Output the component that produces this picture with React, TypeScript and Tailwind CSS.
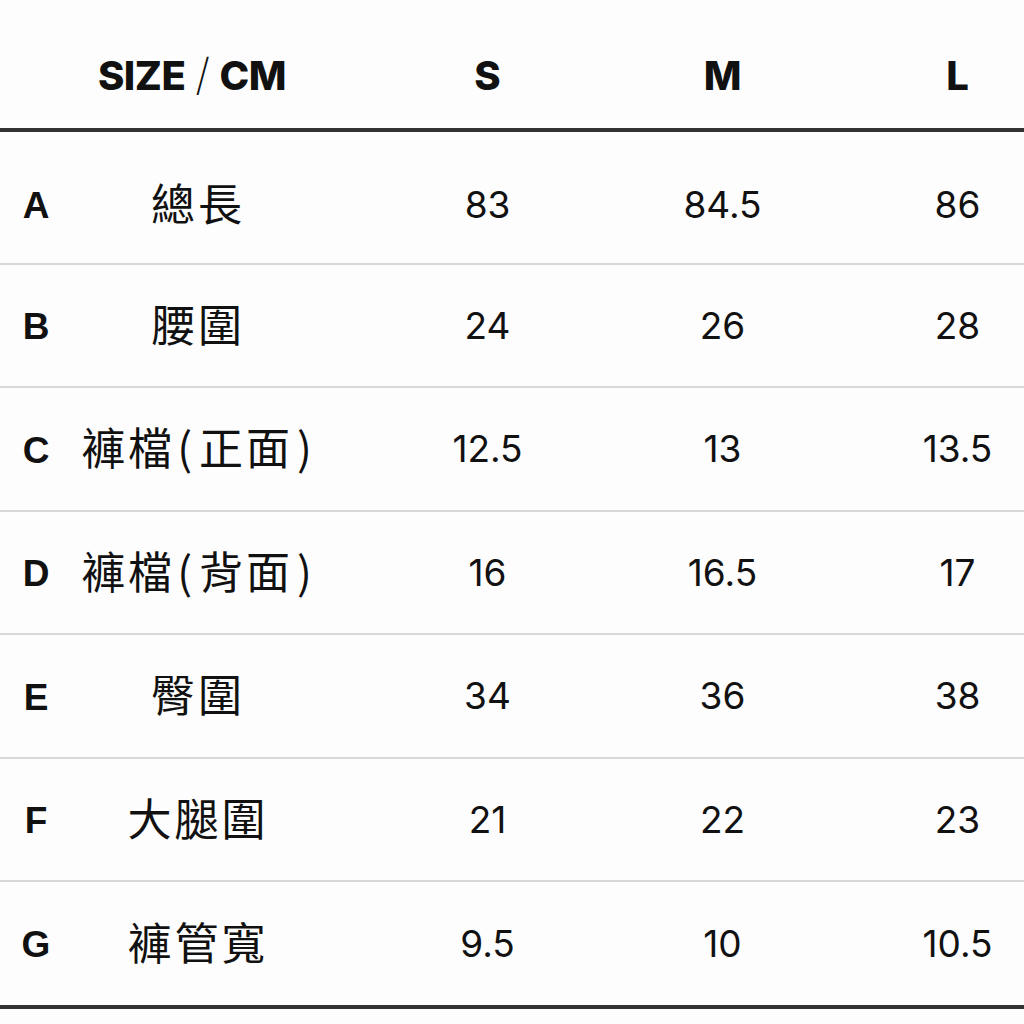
import React from 'react';

interface SizeRow {
  key: string;
  label: string;
  s: string;
  m: string;
  l: string;
  height: string;
}

const rows: SizeRow[] = [
  { key: 'A', label: '總長', s: '83', m: '84.5', l: '86', height: 'h-[133px] pt-[14px]' },
  { key: 'B', label: '腰圍', s: '24', m: '26', l: '28', height: 'h-[123px]' },
  { key: 'C', label: '褲檔(正面)', s: '12.5', m: '13', l: '13.5', height: 'h-[124px]' },
  { key: 'D', label: '褲檔(背面)', s: '16', m: '16.5', l: '17', height: 'h-[123px]' },
  { key: 'E', label: '臀圍', s: '34', m: '36', l: '38', height: 'h-[124px]' },
  { key: 'F', label: '大腿圍', s: '21', m: '22', l: '23', height: 'h-[123px]' },
  { key: 'G', label: '褲管寬', s: '9.5', m: '10', l: '10.5', height: 'h-[123px]' },
];

const gridCols = 'grid grid-cols-[72px_298px_235px_235px_235px] w-[1075px]';
const numCls = "flex items-center justify-center text-[37px] text-[#111] font-['Inter',sans-serif]";

// parens get a little room so they sit like the half-width ones in the print
const Label = ({ text }: { text: string }) => {
  const parts = text.split(/([()])/);
  return (
    <>
      {parts.map((p, i) =>
        p === '(' || p === ')' ? (
          <span key={i} className={p === '(' ? 'ml-[2px] mr-[4px]' : 'ml-[4px]'}>
            {p}
          </span>
        ) : (
          <span key={i}>{p}</span>
        )
      )}
    </>
  );
};

export default function App() {
  return (
    <div className="w-[1024px] h-[1024px] overflow-hidden bg-[#fdfdfd]">
      {/* header */}
      <div className={`${gridCols} h-[128px] pt-[24px] items-center font-['Inter',sans-serif] font-extrabold text-[40px] leading-[48px] text-[#111]`}>
        <div className="col-span-2 pl-[14px] text-center tracking-[-0.5px]">
          SIZE<span className="mx-[10px] font-extralight text-[44px] leading-[40px]">/</span>CM
        </div>
        <div className="text-center">S</div>
        <div className="text-center">M</div>
        <div className="text-center">L</div>
      </div>
      <div className="h-[4px] bg-[#333]" />

      {rows.map((row, i) => (
        <div
          key={row.key}
          className={`${gridCols} ${row.height} ${i < rows.length - 1 ? 'border-b-2 border-[#d8d8d8]' : ''}`}
        >
          <div className="flex items-center justify-center pt-[3px] text-[37px] font-bold text-[#111] font-['Liberation_Sans',sans-serif]">
            {row.key}
          </div>
          <div className="flex items-center justify-center pr-[46px] pb-[6px] text-[44px] tracking-[3px] text-[#111] font-['Noto_Sans_CJK_TC',sans-serif]">
            <Label text={row.label} />
          </div>
          <div className={numCls}>{row.s}</div>
          <div className={numCls}>{row.m}</div>
          <div className={numCls}>{row.l}</div>
        </div>
      ))}

      <div className="h-[4px] bg-[#333]" />
    </div>
  );
}
